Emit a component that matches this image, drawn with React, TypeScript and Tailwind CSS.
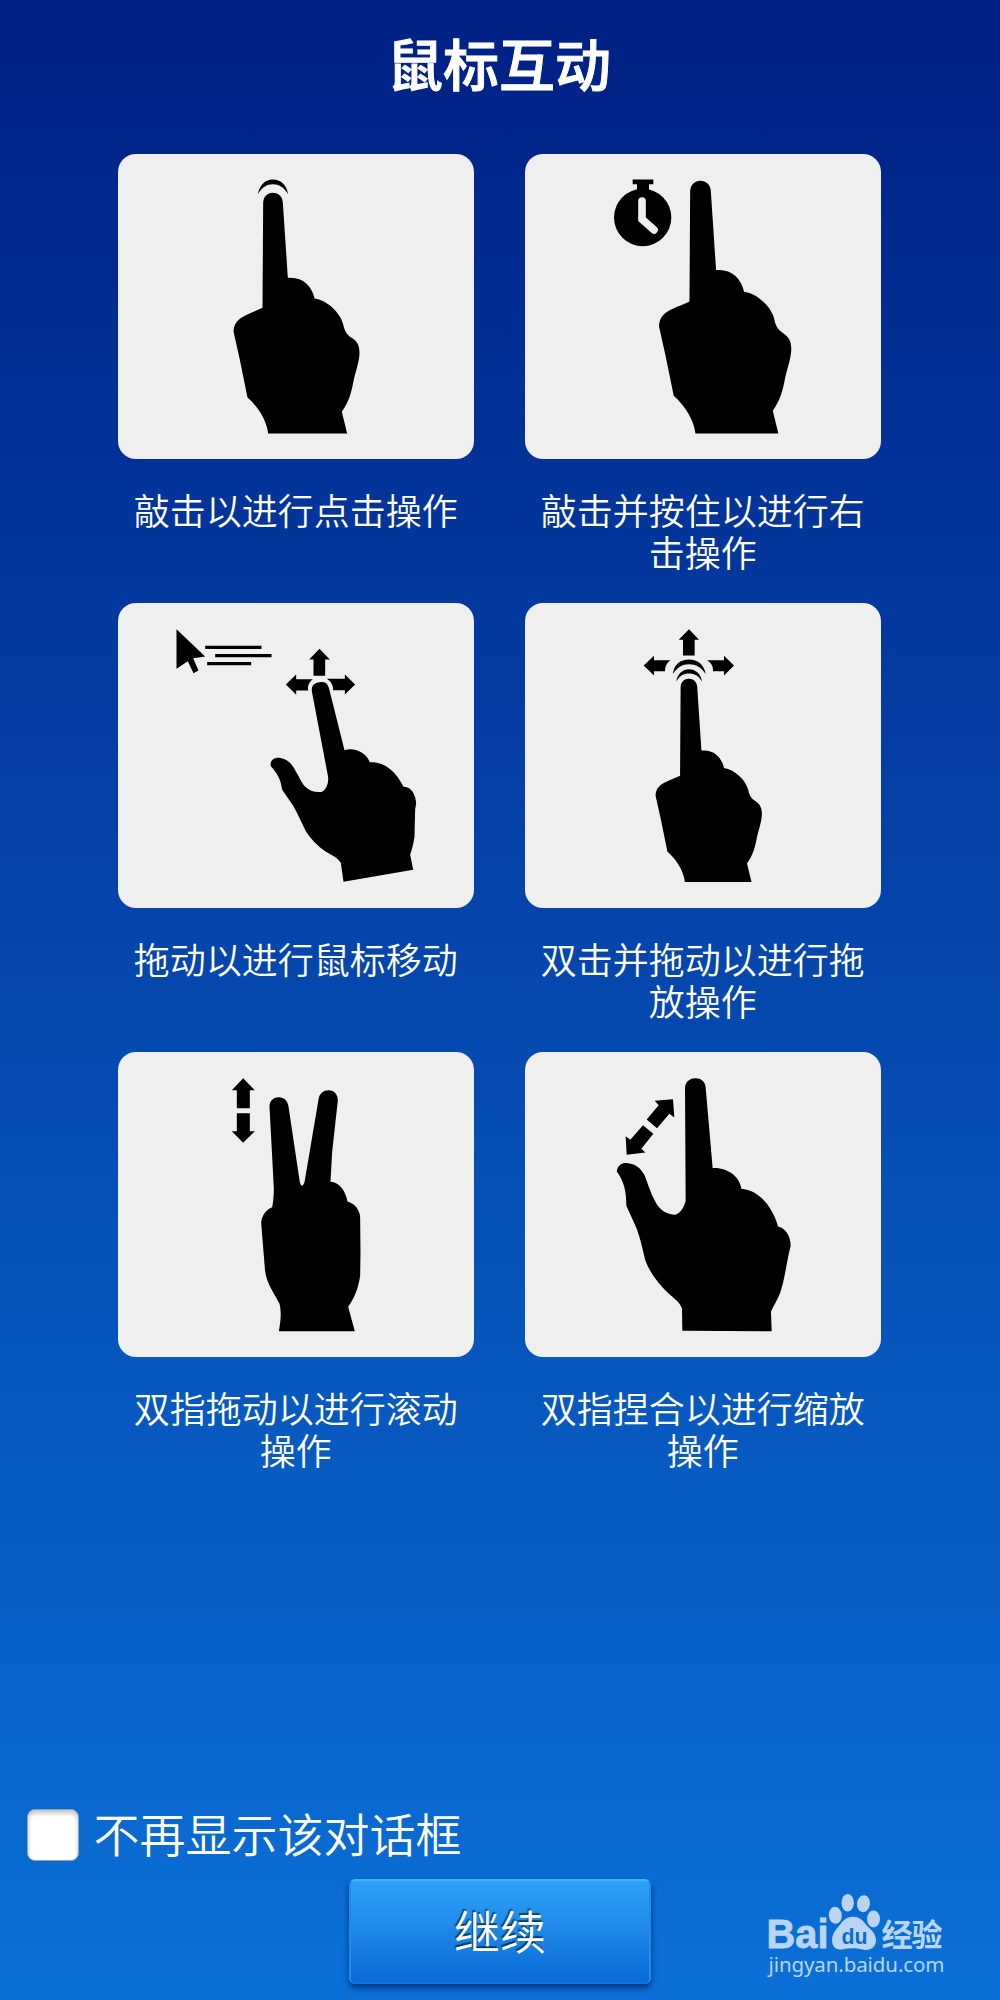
import type { ReactNode } from "react";

const HAND_PATH =
  "M456 473 L458 157 C459 140 471 128 487 128 C504 128 516 140 517 157 L532 383 C574 379 604 405 612 445 C649 450 689 487 698 522 C703 547 711 555 728 566 C742 576 747 590 747 610 C746 635 736 663 730 688 C722 730 716 753 694 785 L710 850 L473 850 C469 814 446 773 411 742 L388 629 L369 544 C371 502 404 497 456 473Z";

type IconProps = {
  viewBox: string;
  children: ReactNode;
};

function GestureIcon({ viewBox, children }: IconProps) {
  return (
    <svg viewBox={viewBox} className="block h-full w-full" fill="#000">
      {children}
    </svg>
  );
}

function TapIcon() {
  return (
    <GestureIcon viewBox="22.5 11.5 1069.5 916.5">
      <path d="M442 132 C448 103 465 88 487 88 C510 88 528 103 533 132 C520 111 506 102 487 102 C469 102 454 111 442 132Z" />
      <path d={HAND_PATH} />
    </GestureIcon>
  );
}

function HoldIcon() {
  return (
    <GestureIcon viewBox="15 11.5 1069.5 916.5">
      {/* Stopwatch */}
      <circle cx="368" cy="202" r="86" />
      <path d="M338 88 H400 V102 H387 V124 H351 V102 H338Z" />
      <path
        d="M366 153 V207 L402 239"
        fill="none"
        stroke="#efefef"
        strokeWidth="23"
        strokeLinecap="round"
        strokeLinejoin="miter"
      />
      <path d={HAND_PATH} transform="translate(29.6 -42.4) scale(1.05)" />
    </GestureIcon>
  );
}

function MoveIcon() {
  return (
    <GestureIcon viewBox="22.5 23.5 1069.5 916.5">
      {/* Cursor with speed lines */}
      <path d="M198 102 L284 184 L248 189 L264 226 L249 234 L232 198 L198 221Z" />
      <path d="M284 152 H453 V161.5 H284Z M314 176.5 H483 V186 H314Z M290 200.5 H422 V210 H290Z" />
      {/* Arrows */}
      <path d="M627 161 L658 193 H644 V242 H609 V193 H596Z" />
      <path d="M526 268 L557 238 V252 H607 C596 260 591 271 593 286 H557 V299Z" />
      <path d="M734 268 L703 238 V251 H649 C662 260 668 270 668 285 H703 V298Z" />
      <path d="M604 288 C603 270 611 263 628 261 C645 257 654 268 657 285 L702 465 C734 455 768 474 778 501 C824 499 858 530 879 575 C902 573 916 600 917 625 L914 642 L912 724 C909 746 905 760 899 779 L908 824 L699 860 L691 803 C681 787 663 779 645 769 C620 751 600 731 586 708 C572 681 561 654 548 632 L515 584 C511 552 500 534 481 513 C477 493 495 485 512 489 C533 491 548 512 556 529 C569 549 574 567 588 578 C599 588 614 592 635 590 C648 580 654 567 653 546Z" />
    </GestureIcon>
  );
}

function DragIcon() {
  return (
    <GestureIcon viewBox="15 23.5 1069.5 916.5">
      <path d="M507 102 L537 134 H524 V181 H489 V134 H476Z" />
      <path d="M371 211 L402 182 V195 H451 C441 202 435 213 435 228 H402 V241Z" />
      <path d="M642 211 L612 182 V195 H561 C573 202 580 212 579 228 H612 V241Z" />
      <path d="M459 237 C461 208 481 193 507 193 C534 193 553 209 557 237 C544 216 528 207 507 207 C487 207 471 216 459 237Z" />
      <path d="M469 259 C472 236 488 222 507 222 C527 222 543 236 546 259 C535 241 523 235 507 235 C491 235 479 242 469 259Z" />
      <path d={HAND_PATH} transform="translate(95.3 142.8) scale(0.844)" />
    </GestureIcon>
  );
}

function ScrollIcon() {
  return (
    <GestureIcon viewBox="22.5 20.5 1069.5 916.5">
      <path d="M398 99 L433 135 H418 V189 H379 V135 H364Z" />
      <path d="M398 293 L433 258 H418 V204 H379 V258 H364Z" />
      <path d="M477 185 C477 166 489 156 505 156 C521 156 532 167 534 184 L568 411 Q574 432 582 411 L624 163 C626 145 639 135 655 135 C672 135 682 148 682 166 L665 320 L660 410 C687 411 705 438 711 469 C732 475 748 493 749 517 L750 620 L749 690 C745 724 733 756 713 785 L733 858 H505 C511 828 513 800 507 776 C489 740 466 713 463 669 L459 620 L452 533 C453 511 468 492 485 486 C489 465 490 448 490 430Z" />
    </GestureIcon>
  );
}

function ZoomIcon() {
  return (
    <GestureIcon viewBox="15 20.5 1069.5 916.5">
      <path d="M459 162 L404 167 L416 180 L380 223 L411 249 L448 206 L463 217Z" />
      <path d="M320 329 L376 322 L364 311 L400 266 L369 240 L331 284 L317 273Z" />
      <path d="M495 128 C496 109 510 99 526 99 C543 99 556 109 557 127 L578 369 C620 366 659 393 664 431 C718 435 759 487 774 544 C800 550 812 577 812 602 C800 648 794 707 780 744 C771 766 761 782 753 799 L755 858 L487 857 L486 790 C479 769 461 759 445 744 C416 717 389 682 376 646 C366 605 360 574 346 541 L319 482 C319 445 315 412 290 378 C294 359 307 352 324 354 C347 356 363 370 373 389 C384 415 391 444 406 470 C421 497 440 508 466 509 C480 504 491 491 497 467Z" />
    </GestureIcon>
  );
}

const gestures = [
  { icon: <TapIcon />, label: "敲击以进行点击操作" },
  { icon: <HoldIcon />, label: "敲击并按住以进行右击操作" },
  { icon: <MoveIcon />, label: "拖动以进行鼠标移动" },
  { icon: <DragIcon />, label: "双击并拖动以进行拖放操作" },
  { icon: <ScrollIcon />, label: "双指拖动以进行滚动操作" },
  { icon: <ZoomIcon />, label: "双指捏合以进行缩放操作" },
];

function BaiduLogo() {
  return (
    <svg viewBox="0 0 190 90" className="h-[90px] w-[190px]" fill="#b9d5f2">
      <text
        x="4.5"
        y="58"
        textLength="62"
        lengthAdjust="spacingAndGlyphs"
        stroke="#b9d5f2"
        strokeWidth="0.8"
        className="font-['Liberation_Sans',sans-serif] text-[40px] font-bold"
      >
        Bai
      </text>
      {/* Paw */}
      <ellipse cx="73.3" cy="25.3" rx="6.5" ry="8.5" transform="rotate(-5 73.3 25.3)" />
      <ellipse cx="85.7" cy="12.7" rx="6.2" ry="8.8" />
      <ellipse cx="101.5" cy="13.7" rx="6.5" ry="8.5" transform="rotate(8 101.5 13.7)" />
      <ellipse cx="111.5" cy="29" rx="6.5" ry="8.5" />
      <path d="M80 32 C86 25 96 25 102 32 C106 38 114 42 114 50 C114 57 109 60 103 60 C96 58 88 58 82 59 C74 61 70 57 70 49 C71 41 76 38 80 32Z" />
      <text
        x="79.5"
        y="54"
        fill="#0a6bd0"
        textLength="26"
        lengthAdjust="spacingAndGlyphs"
        className="font-['Liberation_Sans',sans-serif] text-[22px] font-bold"
      >
        du
      </text>
      <text
        x="119.5"
        y="56"
        textLength="61"
        className="font-['Noto_Sans_CJK_SC',sans-serif] text-[31px] font-bold"
      >
        经验
      </text>
      <text
        x="6.5"
        y="82"
        textLength="176"
        className="font-['Noto_Sans',sans-serif] text-[20.5px] font-normal"
      >
        jingyan.baidu.com
      </text>
    </svg>
  );
}

export default function App() {
  return (
    <div className="relative flex h-[2000px] w-[1000px] flex-col overflow-hidden bg-linear-to-b/srgb from-[#002085] to-[#0a70d7] font-['Noto_Sans_CJK_SC',sans-serif] text-white">
      <h1 className="mt-[27px] mr-[2px] h-[70px] text-center text-[56px] leading-[70px] font-medium [-webkit-text-stroke:1px_white]">
        鼠标互动
      </h1>

      {/* Gesture cards */}
      <div className="mt-[56.5px] ml-[117.5px] grid grid-cols-[356.5px_356.5px] gap-x-[50.5px]">
        {gestures.map(({ icon, label }) => (
          <div key={label} className="h-[449px]">
            <div className="h-[305.5px] overflow-hidden rounded-[18px] bg-[#efefef]">
              {icon}
            </div>
            <p className="mt-[28.5px] px-[15px] text-center text-[36px] leading-[42.5px] font-[350]">
              {label}
            </p>
          </div>
        ))}
      </div>

      {/* Don't show again */}
      <label className="mt-auto mb-[18.5px] ml-[27px] flex h-[52px] items-center">
        <span className="size-[52px] rounded-[8px] border border-[#8fa3b8] bg-white shadow-[inset_0_3px_4px_rgba(0,0,0,0.25)]" />
        <span className="mb-[5px] ml-[14.5px] text-[46px] leading-[52px] font-[350]">
          不再显示该对话框
        </span>
      </label>

      <button className="mb-[16px] h-[105px] w-[302px] self-center rounded-[6px] border-2 border-t-[#45b4fb] border-r-[#1c8ceb] border-b-[#0d78da] border-l-[#1c8ceb] bg-linear-to-b/srgb from-[#2fa2f9] to-[#0a6bd6] pb-[6px] text-[46px] leading-[60px] font-[350] shadow-[0_4px_6px_rgba(0,20,80,0.6)] [text-shadow:-1px_-2px_1px_rgba(0,0,0,0.55)]">
        继续
      </button>

      <div className="absolute top-[1890px] left-[762px]">
        <BaiduLogo />
      </div>
    </div>
  );
}
